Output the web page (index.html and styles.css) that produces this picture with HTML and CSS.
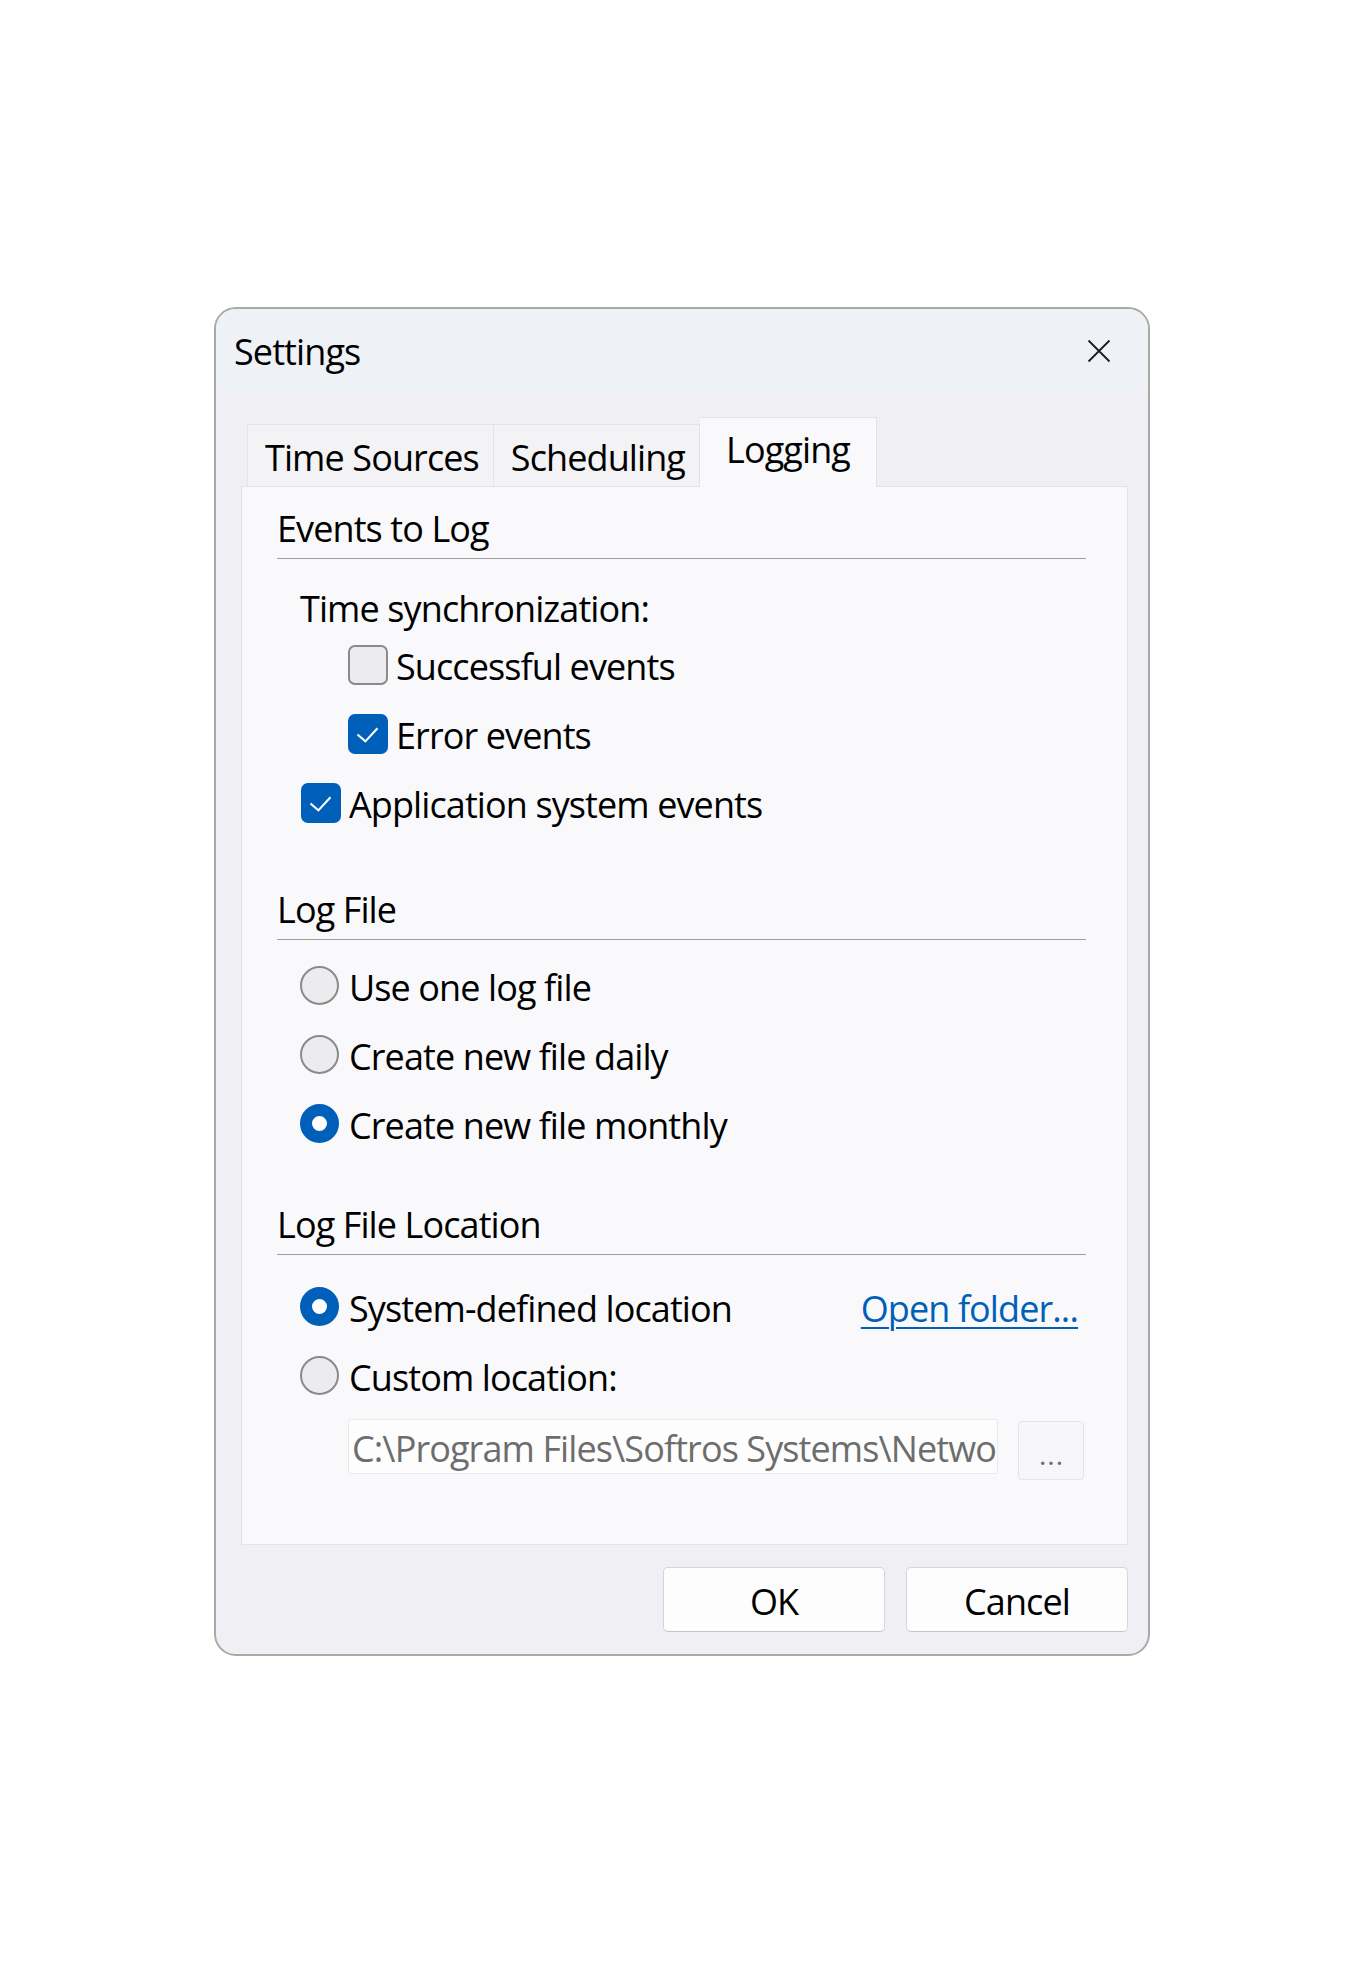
FILE: index.html
```html
<!DOCTYPE html>
<html>
<head>
    <title>Settings</title>
    <link rel="stylesheet" href="styles.css">
</head>
<body>
    <div class="dialog">
        <div class="titlebar">
            <span class="title">Settings</span>
            <button class="close" title="Close">
                <svg width="24" height="24" viewBox="0 0 24 24">
                    <path d="M1.5 1.5 L22.5 22.5 M22.5 1.5 L1.5 22.5" stroke="#1b1b1b" stroke-width="1.8" fill="none"/>
                </svg>
            </button>
        </div>

        <div class="body">
            <div class="tabs">
                <div class="tab">Time Sources</div>
                <div class="tab">Scheduling</div>
                <div class="tab active">Logging</div>
            </div>

            <div class="panel">
                <div class="group events">
                    <div class="group-title">Events to Log</div>
                    <div class="label">Time synchronization:</div>
                    <div class="row sub">
                        <span class="check"></span>
                        <span class="text">Successful events</span>
                    </div>
                    <div class="row sub">
                        <span class="check on"></span>
                        <span class="text">Error events</span>
                    </div>
                    <div class="row">
                        <span class="check on"></span>
                        <span class="text">Application system events</span>
                    </div>
                </div>

                <div class="group logfile">
                    <div class="group-title">Log File</div>
                    <div class="row">
                        <span class="radio"></span>
                        <span class="text">Use one log file</span>
                    </div>
                    <div class="row">
                        <span class="radio"></span>
                        <span class="text">Create new file daily</span>
                    </div>
                    <div class="row">
                        <span class="radio on"></span>
                        <span class="text">Create new file monthly</span>
                    </div>
                </div>

                <div class="group location">
                    <div class="group-title">Log File Location</div>
                    <div class="row">
                        <span class="radio on"></span>
                        <span class="text">System-defined location</span>
                        <a class="link text" href="#">Open folder...</a>
                    </div>
                    <div class="row">
                        <span class="radio"></span>
                        <span class="text">Custom location:</span>
                    </div>
                    <div class="path-row">
                        <input class="path" type="text" value="C:\Program Files\Softros Systems\Network Time System\Logs" disabled>
                        <button class="browse" disabled>...</button>
                    </div>
                </div>
            </div>

            <div class="buttons">
                <button class="btn">OK</button>
                <button class="btn">Cancel</button>
            </div>
        </div>
    </div>

    <!-- checkmark used by checked boxes -->
    <svg width="0" height="0" style="position:absolute">
        <defs>
            <symbol id="tick" viewBox="0 0 38 38">
                <path d="M9 19.5 L16.5 26 L28 13.5" stroke="#fff" stroke-width="2" fill="none"/>
            </symbol>
        </defs>
    </svg>
    <script>
        document.querySelectorAll('.check.on').forEach(function (el) {
            el.innerHTML = '<svg width="40" height="40"><use href="#tick"/></svg>';
        });
    </script>
</body>
</html>
```

FILE: styles.css
```css
body {
    margin: 0;
    background: #fff;
    font-family: "Open Sans", "Noto Sans", sans-serif;
    font-size: 36px;
    letter-spacing: -0.9px;
    color: #000;
}
.dialog {
    width: 932px;
    height: 1345px;
    margin: 307px 0 0 214px;
    border: 2px solid #a9a9a9;
    border-radius: 22px;
    overflow: hidden;
    background: #f0eff3;
    display: flex;
    flex-direction: column;
}
.titlebar {
    height: 83px;
    flex: none;
    background: #eef2f6;
    display: flex;
    align-items: center;
    padding: 0 0 0 18px;
}
.title {
    line-height: 48px;
    padding-top: 3px;
    flex: 1;
}
.close {
    width: 98px;
    height: 83px;
    border: none;
    background: transparent;
    padding: 0;
    display: flex;
    align-items: center;
    justify-content: center;
}
.body {
    flex: 1;
    padding: 25px 20px 0 25px;
    display: flex;
    flex-direction: column;
}

/* tab strip */
.tabs {
    display: flex;
    align-items: flex-end;
    padding-left: 6px;
    position: relative;
    z-index: 1;
}
.tab {
    height: 62px;
    box-sizing: border-box;
    padding: 9px 14px 0 17px;
    line-height: 48px;
    background: #f3f3f5;
    border: 1px solid #e4e4e6;
    border-bottom: none;
}
.tab + .tab {
    border-left: none;
}
.tab.active {
    height: 70px;
    padding: 8px 26px 0 26px;
    margin-bottom: -1px;
    background: #f9f9fb;
}

.panel {
    height: 1059px;
    box-sizing: border-box;
    background: #f9f9fb;
    border: 1px solid #e4e4e6;
    padding: 15px 41px 0 35px;
}
.group-title {
    line-height: 48px;
    padding: 3px 0 5px;
    border-bottom: 1px solid #a0a0a0;
}
.label {
    line-height: 48px;
    margin: 26px 0 -3px 23px;
}
.row {
    height: 69px;
    display: flex;
    align-items: center;
    gap: 10px;
    line-height: 48px;
    padding-left: 24px;
}
.row .text {
    padding-top: 5px;
}
.events .row {
    gap: 8px;
}
.row.sub {
    padding-left: 71px;
}
.logfile {
    margin-top: 46px;
}
.logfile .group-title + .row {
    margin-top: 11px;
}
.location {
    margin-top: 40px;
}
.location .group-title + .row {
    margin-top: 17px;
}
.location .row,
.logfile .row {
    padding-left: 23px;
}

.check {
    width: 40px;
    height: 40px;
    box-sizing: border-box;
    border: 2px solid #8a8a8a;
    border-radius: 7px;
    background: #ececee;
    flex: none;
}
.check.on {
    border: none;
    background: #005fb8;
}
.check svg {
    display: block;
}
.radio {
    width: 39px;
    height: 39px;
    box-sizing: border-box;
    border: 2px solid #8a8a8a;
    border-radius: 50%;
    background: #ececee;
    flex: none;
}
.radio.on {
    border: 12px solid #005fb8;
    background: #fff;
}

.link {
    margin-left: auto;
    margin-right: 8px;
    color: #005fb8;
    text-decoration: underline;
    text-decoration-thickness: 2px;
    text-underline-offset: 5px;
}

.path-row {
    display: flex;
    align-items: flex-start;
    gap: 20px;
    margin: 9px 0 0 71px;
}
.path {
    width: 650px;
    height: 55px;
    box-sizing: border-box;
    font: inherit;
    letter-spacing: inherit;
    color: #6d6d6d;
    background: #fdfdfd;
    border: 1px solid #e9e9eb;
    border-radius: 3px;
    padding: 4px 0 0 3px;
    outline: none;
}
.browse {
    width: 66px;
    height: 59px;
    margin-top: 2px;
    font-family: inherit;
    font-size: 28px;
    letter-spacing: 1px;
    color: #6d6d6d;
    background: #f7f7f9;
    border: 1px solid #e4e4e6;
    border-radius: 4px;
    padding: 6px 0 0 1px;
}

.buttons {
    display: flex;
    justify-content: flex-end;
    gap: 21px;
    margin-top: 22px;
}
.btn {
    width: 222px;
    height: 65px;
    font: inherit;
    letter-spacing: inherit;
    color: #000;
    background: #fdfdfd;
    border: 1px solid #d6d6d8;
    border-bottom-color: #c4c4c6;
    border-radius: 5px;
    padding: 3px 0 0;
}
```
